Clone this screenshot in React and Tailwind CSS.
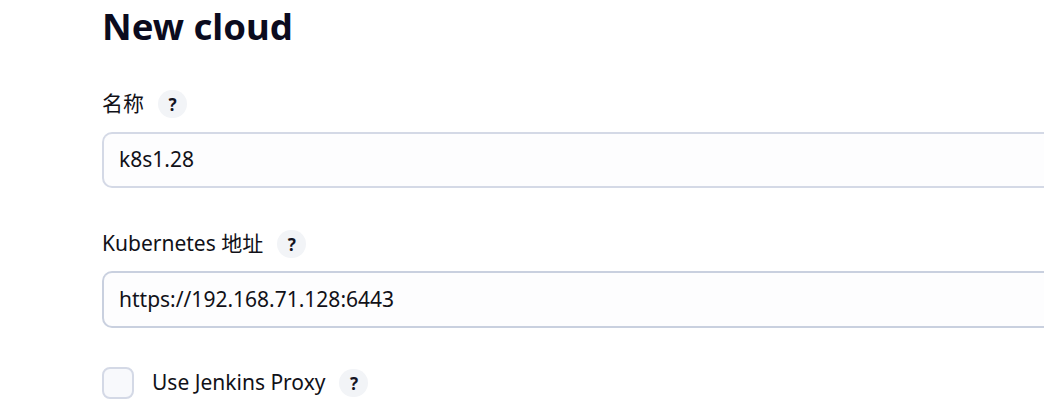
export default function App() {
  const font = { fontFamily: '"Noto Sans", "Noto Sans CJK SC", sans-serif' };
  const Help = () => (
    <span className="ml-[14px] inline-flex h-7 w-[29px] items-center justify-center rounded-full bg-[#f2f4f7] text-[17px] font-bold leading-none text-[#14141f]">?</span>
  );
  return (
    <div className="h-[420px] w-[1044px] overflow-hidden bg-white text-[#111118]" style={font}>
      <div className="pl-[102px]">
        <h1 className="h-[54px] pt-[2px] text-[36.5px] font-bold leading-[48px] text-[#0b0b1e]">New cloud</h1>
        <div className="mt-[36px] flex h-7 items-center text-[21px]">
          <span>名称</span>
          <Help />
        </div>
        <div className="mt-[14px] flex h-[56px] items-center rounded-[10px] rounded-r-none border-2 border-r-0 border-[#d4d9e6] bg-[#fdfdfe] pl-[15px] text-[21px]">
          k8s1.28
        </div>
        <div className="mt-[42px] flex h-7 items-center text-[21px]">
          <span>Kubernetes 地址</span>
          <Help />
        </div>
        <div className="mt-[13px] flex h-[57px] items-center rounded-[10px] rounded-r-none border-2 border-r-0 border-[#c9d0df] bg-[#fdfdfe] pl-[15px] text-[21px]">
          https://192.168.71.128:6443
        </div>
        <div className="mt-[39px] flex items-center text-[21px]">
          <span className="h-8 w-8 rounded-[8px] border-2 border-[#d4d9e6] bg-[#f8f9fc]"></span>
          <span className="ml-[18px]">Use Jenkins Proxy</span>
          <Help />
        </div>
      </div>
    </div>
  );
}
